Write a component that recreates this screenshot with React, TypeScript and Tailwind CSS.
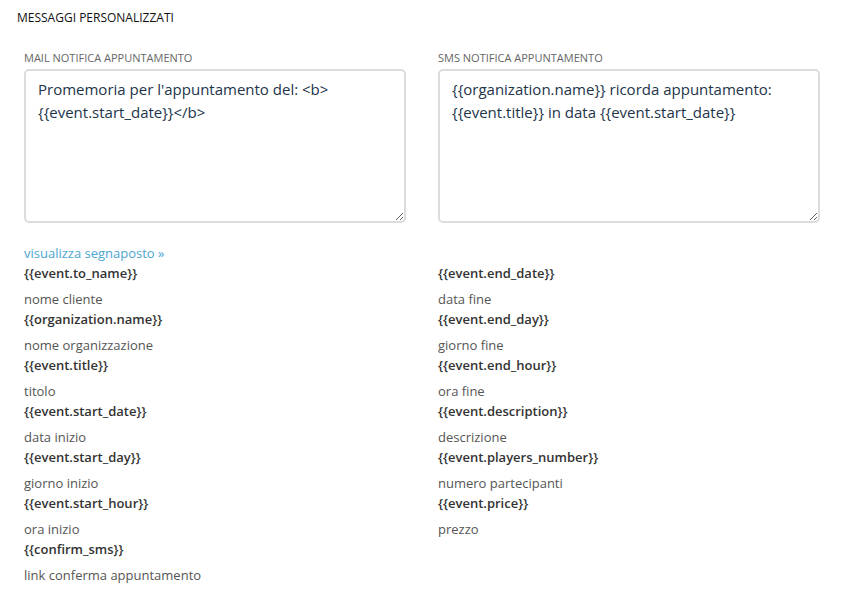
import React from "react";

const LEFT = [
  { code: "{{event.to_name}}", label: "nome cliente" },
  { code: "{{organization.name}}", label: "nome organizzazione" },
  { code: "{{event.title}}", label: "titolo" },
  { code: "{{event.start_date}}", label: "data inizio" },
  { code: "{{event.start_day}}", label: "giorno inizio" },
  { code: "{{event.start_hour}}", label: "ora inizio" },
  { code: "{{confirm_sms}}", label: "link conferma appuntamento" },
];

const RIGHT = [
  { code: "{{event.end_date}}", label: "data fine" },
  { code: "{{event.end_day}}", label: "giorno fine" },
  { code: "{{event.end_hour}}", label: "ora fine" },
  { code: "{{event.description}}", label: "descrizione" },
  { code: "{{event.players_number}}", label: "numero partecipanti" },
  { code: "{{event.price}}", label: "prezzo" },
];

function PlaceholderList({ items }: { items: { code: string; label: string }[] }) {
  return (
    <dl>
      {items.map((it) => (
        <div key={it.code}>
          <dt className="text-[13px] leading-[20px] font-semibold text-[#333]">{it.code}</dt>
          <dd className="mt-[6px] text-[13px] leading-[20px] text-[#555]">{it.label}</dd>
        </div>
      ))}
    </dl>
  );
}

function Field({ label, value }: { label: string; value: string }) {
  return (
    <div>
      <label className="block text-[11px] leading-[14px] uppercase text-[#666] mb-[4px]">{label}</label>
      <textarea
        defaultValue={value}
        className="block w-full h-[154px] border-2 border-[#dcdcdc] rounded-[5px] bg-white px-[12px] pt-[7px] text-[15px] leading-[23px] text-[#22344a] outline-none"
      />
    </div>
  );
}

export default function App() {
  return (
    <div className="min-h-screen bg-white pt-[10px] pl-[17px] pr-[22px]" style={{ fontFamily: '"Open Sans", sans-serif' }}>
      <h2 className="text-[12px] leading-[16px] font-normal text-[#111] uppercase">Messaggi personalizzati</h2>

      <div className="pl-[7px] mt-[25px] grid grid-cols-2 gap-x-[32px]">
        <Field
          label="Mail notifica appuntamento"
          value={"Promemoria per l'appuntamento del: <b>\n{{event.start_date}}</b>"}
        />
        <Field
          label="SMS notifica appuntamento"
          value={"{{organization.name}} ricorda appuntamento:\n{{event.title}} in data {{event.start_date}}"}
        />

        <div className="mt-[20px]">
          <a href="#" className="block text-[13px] leading-[20px] text-[#4ca6cf]">visualizza segnaposto »</a>
          <PlaceholderList items={LEFT} />
        </div>
        <div className="mt-[40px]">
          <PlaceholderList items={RIGHT} />
        </div>
      </div>
    </div>
  );
}
